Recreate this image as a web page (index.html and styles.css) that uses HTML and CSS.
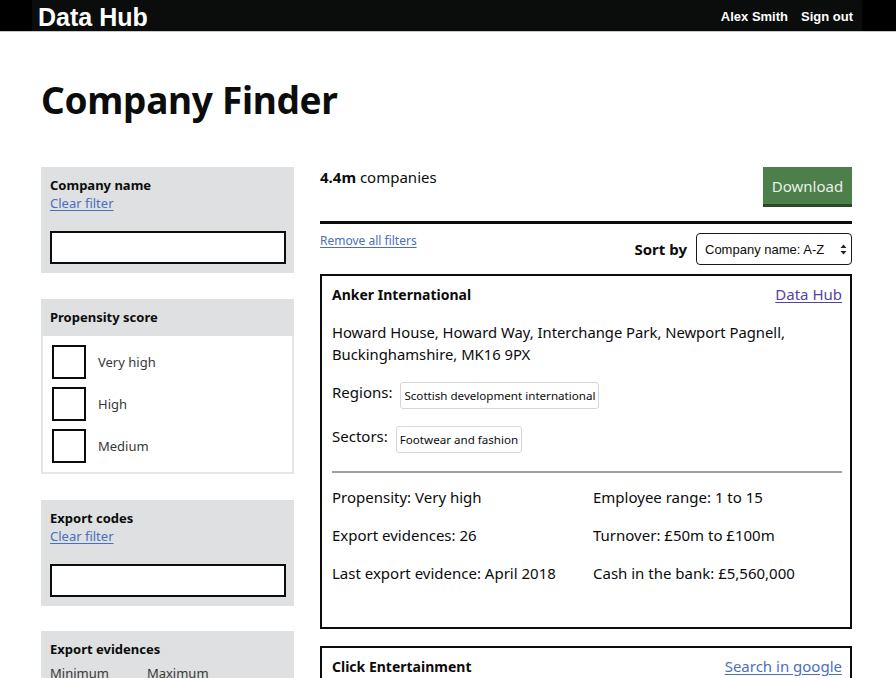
FILE: index.html
```html
<!DOCTYPE html>
<html lang="en">
<head>
<meta charset="utf-8">
<title>Company Finder</title>
<link rel="stylesheet" href="styles.css">
</head>
<body>
<header class="topbar">
  <div class="topbar-inner">
    <a class="brand" href="#">Data Hub</a>
    <nav class="user-nav">
      <a href="#">Alex Smith</a>
      <a href="#">Sign out</a>
    </nav>
  </div>
</header>
<main class="page">
  <h1 class="page-title">Company Finder</h1>
  <div class="layout">
    <aside class="filters">
      <section class="filter">
        <h2 class="filter-title">Company name</h2>
        <a class="link clear" href="#">Clear filter</a>
        <input class="text-input" type="text" aria-label="Company name">
      </section>
      <section class="filter filter-checks">
        <h2 class="filter-title filter-head">Propensity score</h2>
        <div class="checks">
          <label class="check"><span class="box"></span><span>Very high</span></label>
          <label class="check"><span class="box"></span><span>High</span></label>
          <label class="check"><span class="box"></span><span>Medium</span></label>
        </div>
      </section>
      <section class="filter">
        <h2 class="filter-title">Export codes</h2>
        <a class="link clear" href="#">Clear filter</a>
        <input class="text-input" type="text" aria-label="Export codes">
      </section>
      <section class="filter">
        <h2 class="filter-title">Export evidences</h2>
        <div class="minmax"><span>Minimum</span><span>Maximum</span></div>
      </section>
    </aside>
    <section class="results">
      <div class="results-top">
        <p class="count"><strong>4.4m</strong> companies</p>
        <button class="btn-download" type="button">Download</button>
      </div>
      <div class="results-bar">
        <a class="link small" href="#">Remove all filters</a>
        <div class="sort">
          <span class="sort-label">Sort by</span>
          <div class="select">Company name: A-Z <span class="arrows"><svg width="7" height="11" viewBox="0 0 7 11"><path d="M3.5 0.5 L6.5 4 L0.5 4 Z M3.5 10.5 L6.5 7 L0.5 7 Z" fill="#222"/></svg></span></div>
        </div>
      </div>
      <article class="card">
        <div class="card-head">
          <h3 class="card-title">Anker International</h3>
          <a class="link visited" href="#">Data Hub</a>
        </div>
        <p class="address">Howard House, Howard Way, Interchange Park, Newport Pagnell, Buckinghamshire, MK16 9PX</p>
        <div class="tag-row"><span class="tag-label">Regions:</span><span class="tag">Scottish development international</span></div>
        <div class="tag-row"><span class="tag-label">Sectors:</span><span class="tag">Footwear and fashion</span></div>
        <hr class="sep">
        <div class="stats">
          <span>Propensity: Very high</span><span>Employee range: 1 to 15</span>
          <span>Export evidences: 26</span><span>Turnover: £50m to £100m</span>
          <span>Last export evidence: April 2018</span><span>Cash in the bank: £5,560,000</span>
        </div>
      </article>
      <article class="card">
        <div class="card-head">
          <h3 class="card-title">Click Entertainment</h3>
          <a class="link" href="#">Search in google</a>
        </div>
        <p class="address">Click House, London</p>
      </article>
    </section>
  </div>
</main>
</body>
</html>
```
FILE: styles.css
```css
* { box-sizing: border-box; }
html, body { margin: 0; padding: 0; background: #fff; }
body {
  font-family: "Noto Sans", "Liberation Sans", Arial, sans-serif;
  color: #0b0c0c;
  overflow: hidden;
  height: 678px;
}
a { text-decoration: none; color: inherit; }

.topbar {
  background: #000;
  height: 32px;
  border-bottom: 1px solid #c8c8c8;
}
.topbar-inner {
  width: 830px;
  margin-left: 32px;
  height: 31px;
  background: #0b0c0c;
  display: flex;
  justify-content: space-between;
  align-items: center;
  padding: 0 9px 0 6px;
}
.brand {
  font-family: "Liberation Sans", Arial, sans-serif;
  font-weight: bold;
  font-size: 25px;
  color: #fff;
  line-height: 1;
  padding-top: 4px;
}
.user-nav {
  display: flex;
  gap: 13px;
  font-family: "Liberation Sans", Arial, sans-serif;
  font-weight: bold;
  font-size: 13px;
  color: #fff;
  padding-top: 1px;
}
.user-nav a { color: #fff; }

.page {
  padding-left: 41px;
  width: 853px;
}
.page-title {
  font-size: 37px;
  font-weight: bold;
  margin: 46px 0 0 0;
  line-height: 44px;
  letter-spacing: -0.3px;
}
.layout {
  display: flex;
  gap: 26px;
  margin-top: 45px;
  align-items: flex-start;
}

.filters {
  width: 253px;
  flex: none;
  display: flex;
  flex-direction: column;
  gap: 26px;
}
.filter {
  background: #dee0e2;
  padding: 9px 8px 9px 9px;
  display: flex;
  flex-direction: column;
}
.filter:last-child { margin-top: -1px; }
.filter-title {
  font-size: 13px;
  font-weight: bold;
  margin: 0;
  line-height: 18px;
}
.link { color: #4a6fbd; text-decoration: underline; text-underline-offset: 2px; }
.link.visited { color: #5444a0; }
.clear { font-size: 13px; line-height: 18px; }
.text-input {
  margin-top: 19px;
  height: 33px;
  width: 236px;
  border: 2px solid #0b0c0c;
  background: #fff;
  font: inherit;
}
.filter-checks {
  padding: 0;
  background: #fff;
}
.filter-head {
  background: #dee0e2;
  height: 37px;
  padding: 9px 9px;
}
.checks {
  border: 2px solid #e4e6e8;
  border-top: none;
  padding: 9px 9px 9px 9px;
  display: flex;
  flex-direction: column;
  gap: 8px;
}
.check {
  display: flex;
  align-items: center;
  gap: 12px;
  font-size: 13px;
  color: #383838;
}
.box {
  width: 34px;
  height: 34px;
  border: 2px solid #0b0c0c;
  flex: none;
}
.minmax {
  display: flex;
  gap: 38px;
  font-size: 13px;
  margin-top: 6px;
  color: #383838;
}

.results {
  width: 532px;
  flex: none;
}
.results-top {
  display: flex;
  justify-content: space-between;
  align-items: flex-start;
}
.count {
  margin: 0;
  font-size: 15px;
  line-height: 20px;
}
.btn-download {
  background: #4c7f4a;
  color: #e8f0e8;
  border: none;
  box-shadow: 0 3px 0 #2a4a29;
  height: 37px;
  width: 89px;
  font-family: inherit;
  font-size: 15px;
  padding: 0;
  margin-bottom: 3px;
}
.results-bar {
  border-top: 3px solid #0b0c0c;
  margin-top: 14px;
  padding-top: 9px;
  display: flex;
  justify-content: space-between;
  align-items: flex-start;
}
.small { font-size: 12px; line-height: 14px; margin-top: 1px; }
.sort {
  display: flex;
  align-items: center;
  gap: 9px;
}
.sort-label {
  font-size: 15px;
  font-weight: bold;
}
.select {
  height: 32px;
  width: 156px;
  border: 1px solid #1a1a1a;
  border-radius: 4px;
  font-family: "Liberation Sans", Arial, sans-serif;
  font-size: 13px;
  display: flex;
  align-items: center;
  justify-content: space-between;
  padding: 0 4px 0 8px;
}
.arrows { display: flex; }

.card {
  border: 2px solid #0b0c0c;
  margin-top: 9px;
  padding: 8px 8px 43px 10px;
}
.card + .card { margin-top: 17px; }
.card-head {
  display: flex;
  justify-content: space-between;
  align-items: baseline;
}
.card-title {
  margin: 0;
  font-size: 14px;
  font-weight: bold;
  line-height: 20px;
}
.card-head .link { font-size: 15px; }
.address {
  margin: 16px 0 0 0;
  font-size: 14.8px;
  line-height: 22px;
  max-width: 470px;
}
.tag-row {
  display: flex;
  align-items: flex-start;
  gap: 8px;
  margin-top: 17px;
  font-size: 15px;
}
.tag-row + .tag-row { margin-top: 17px; }
.tag-label { line-height: 20px; }
.tag {
  font-size: 11.6px;
  border: 1px solid #d6d6d6;
  border-radius: 3px;
  padding: 0 3px;
  height: 27px;
  display: flex;
  align-items: center;
}
.sep {
  border: none;
  border-top: 2px solid #a0a0a0;
  margin: 18px 0 0 0;
}
.stats {
  display: grid;
  grid-template-columns: 261px 1fr;
  row-gap: 16px;
  margin-top: 13px;
  font-size: 15px;
  line-height: 22px;
}
```
